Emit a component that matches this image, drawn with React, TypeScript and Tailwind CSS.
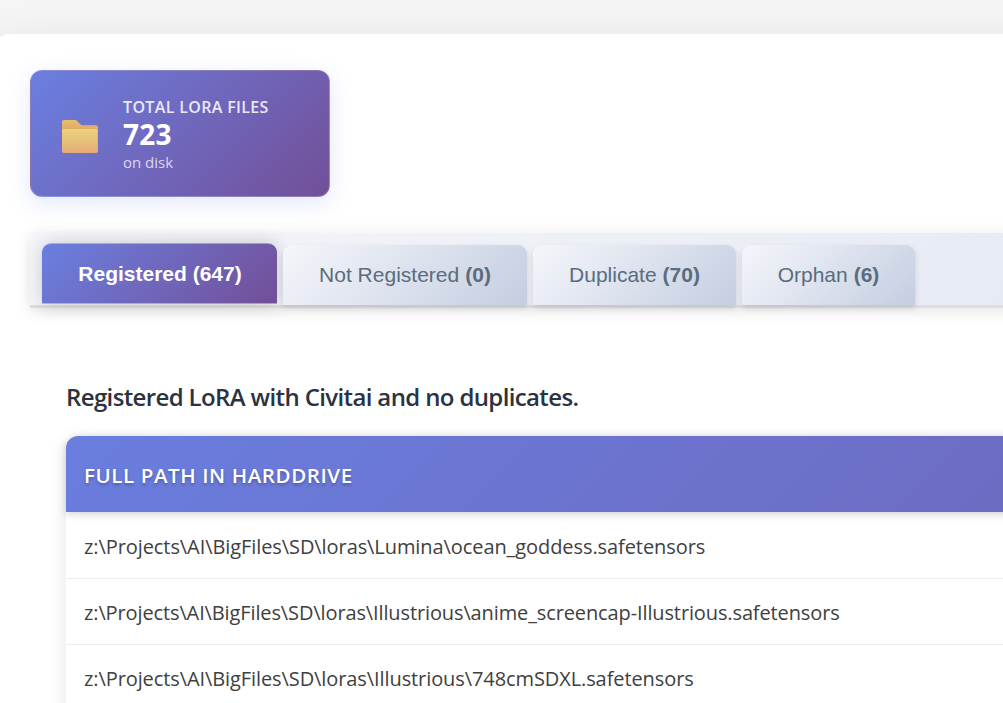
const tabs = [
  { label: 'Not Registered', count: 0, width: 'w-[244px]' },
  { label: 'Duplicate', count: 70, width: 'w-[203px]' },
  { label: 'Orphan', count: 6, width: 'w-[173px]' },
];

const rows = [
  { path: 'z:\\Projects\\AI\\BigFiles\\SD\\loras\\Lumina\\ocean_goddess.safetensors', spacing: 'tracking-[-0.08px]' },
  { path: 'z:\\Projects\\AI\\BigFiles\\SD\\loras\\Illustrious\\anime_screencap-Illustrious.safetensors', spacing: 'tracking-[-0.12px]' },
  { path: 'z:\\Projects\\AI\\BigFiles\\SD\\loras\\Illustrious\\748cmSDXL.safetensors', spacing: 'tracking-[-0.09px]' },
];

function FolderIcon() {
  return (
    <svg width="36" height="33" viewBox="0 0 36 33" className="block">
      <defs>
        <linearGradient id="folder-back" x1="0" y1="0" x2="0" y2="1">
          <stop offset="0" stopColor="#e8bd6d" />
          <stop offset="0.35" stopColor="#dda763" />
        </linearGradient>
        <linearGradient id="folder-front" x1="0" y1="0" x2="0" y2="1">
          <stop offset="0" stopColor="#ead47b" />
          <stop offset="1" stopColor="#e5ac77" />
        </linearGradient>
      </defs>
      <path d="M0 2Q0 0 2 0H13Q14.2 0 15.2 1L18.5 4.4Q19.3 5.2 20.5 5.2H34Q36 5.2 36 7.2V31Q36 33 34 33H2Q0 33 0 31Z" fill="url(#folder-back)" />
      <path d="M0 10.5Q0 9 1.5 9H34.3Q35.6 9 35.6 10.5V31Q35.6 32.7 34 32.7H2Q0 32.7 0 31Z" fill="url(#folder-front)" />
    </svg>
  );
}

export default function App() {
  return (
    <div className="h-[703px] w-[1003px] overflow-hidden bg-[#f5f5f5] pt-[34px] font-['Open_Sans','Noto_Sans',sans-serif]">
      <main className="-ml-2 h-[900px] w-[2300px] rounded-[18px] bg-white pt-9 pl-[38px] shadow-[0_12px_48px_rgba(0,0,0,0.1)]">
        <section className="flex h-[127px] w-[300px] items-center rounded-xl border border-white/20 bg-linear-135 from-[#697fe1] to-[#714f98] pl-[31px] shadow-[0_6px_22px_rgba(102,126,234,0.18)]">
          <div className="mt-[5px] w-[61px]">
            <FolderIcon />
          </div>
          <div className="mt-0.5 flex flex-col whitespace-nowrap">
            <span className="h-5 text-[16px] leading-[21px] font-semibold tracking-[0.35px] text-white/85">TOTAL LORA FILES</span>
            <span className="h-[35px] text-[28px] leading-[34px] font-bold tracking-[0.2px] text-white">723</span>
            <span className="h-[21px] text-[15px] leading-[21px] text-white/75">on disk</span>
          </div>
        </section>

        <nav className="mt-9 flex h-[75px] w-[2224px] items-start gap-1.5 border-b-3 border-[#dedede] bg-linear-135 from-[#f5f6fa] to-[#d6ddec] pt-3 pl-3 font-['Liberation_Sans',Arial,sans-serif] text-[21px] text-[#5a6c7d] shadow-[0_3px_15px_rgba(0,0,0,0.11)]">
          <button className="-mt-0.5 flex h-[61px] w-[235px] items-center justify-center rounded-t-[9px] border-y border-white/40 bg-linear-135 from-[#697fe1] to-[#714f98] pl-px font-bold whitespace-nowrap text-white shadow-[0_0_18px_rgba(0,0,0,0.18)]">
            Registered (647)
          </button>
          {tabs.map((tab) => (
            <button
              key={tab.label}
              className={`flex h-[60px] ${tab.width} items-center justify-center gap-1.5 rounded-t-[9px] bg-linear-135 from-[#f5f6fa] to-[#c4cee1] whitespace-nowrap shadow-[0_3px_6px_rgba(0,0,0,0.13)]`}
            >
              <span>{tab.label}</span>
              <b>({tab.count})</b>
            </button>
          ))}
        </nav>

        <section className="mt-[72px] ml-9 w-[2152px]">
          <h2 className="h-14 text-[24px] leading-[34px] font-semibold tracking-[-0.63px] whitespace-nowrap text-[#2c3340]">
            Registered LoRA with Civitai and no duplicates.
          </h2>
          <div className="h-[500px] rounded-t-xl bg-white shadow-[0_4px_18px_rgba(0,0,0,0.1)]">
            <div className="relative flex h-[76px] items-center rounded-t-xl bg-linear-135 from-[#697edf] to-[#6f56a2] pt-0.5 pl-[18px] text-[20.5px] font-semibold tracking-[0.6px] whitespace-nowrap text-white shadow-[0_2px_8px_rgba(0,0,0,0.18)] text-shadow-[0_2px_3px_rgba(0,0,0,0.25)]">
              FULL PATH IN HARDDRIVE
            </div>
            {rows.map((row) => (
              <div key={row.path} className="flex h-[66px] items-center border-b border-[#ececee] pt-[3px] pl-[18px] text-[20px] whitespace-nowrap text-[#404040] nth-2:h-[67px]">
                <span className={row.spacing}>{row.path}</span>
              </div>
            ))}
          </div>
        </section>
      </main>
    </div>
  );
}
